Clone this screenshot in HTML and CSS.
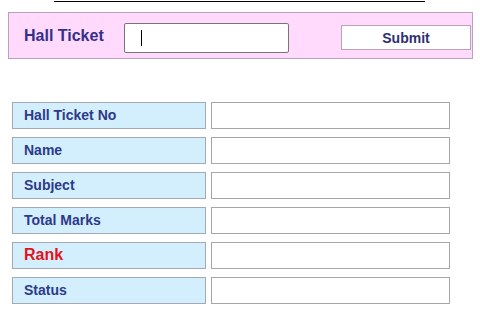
FILE: index.html
```html
<!DOCTYPE html>
<html>
<head>
<meta charset="utf-8">
<link rel="stylesheet" href="styles.css">
</head>
<body>
<div class="rule"></div>
<div class="search">
  <span class="search-label">Hall Ticket</span>
  <div class="field"><span class="caret"></span></div>
  <button class="submit" type="button">Submit</button>
</div>
<div class="results">
  <div class="row"><div class="label">Hall Ticket No</div><div class="value"></div></div>
  <div class="row"><div class="label">Name</div><div class="value"></div></div>
  <div class="row"><div class="label">Subject</div><div class="value"></div></div>
  <div class="row"><div class="label">Total Marks</div><div class="value"></div></div>
  <div class="row"><div class="label rank">Rank</div><div class="value"></div></div>
  <div class="row"><div class="label">Status</div><div class="value"></div></div>
</div>
</body>
</html>
```
FILE: styles.css
```css
* { box-sizing: border-box; }
html, body { margin: 0; padding: 0; background: #ffffff; }
body {
  font-family: "Liberation Sans", Arial, sans-serif;
  width: 480px;
  height: 317px;
  overflow: hidden;
}
.rule {
  margin: 1px 0 0 54px;
  width: 371px;
  height: 1px;
  background: #000000;
}
.search {
  margin: 10px 0 0 8px;
  width: 465px;
  height: 47px;
  border: 1px solid #b9a3bb;
  background: #ffdafc;
  display: flex;
  align-items: center;
  padding: 5px 0 0 15px;
}
.search-label {
  font-size: 16px;
  font-weight: bold;
  color: #33308a;
  width: 100px;
  padding-bottom: 4px;
}
.field {
  width: 165px;
  height: 30px;
  background: #ffffff;
  border: 1px solid #767676;
  border-radius: 2px;
  display: flex;
  align-items: center;
  padding-left: 16px;
}
.caret {
  width: 1px;
  height: 16px;
  background: #000000;
}
.submit {
  margin: 0 0 1px 52px;
  width: 130px;
  height: 25px;
  background: #ffffff;
  border: 1px solid #b9a3bb;
  border-radius: 0;
  font-family: "Liberation Sans", Arial, sans-serif;
  font-size: 14px;
  font-weight: bold;
  color: #2e2f75;
  padding: 0;
}
.results {
  margin: 43px 0 0 12px;
  display: flex;
  flex-direction: column;
  gap: 8px;
}
.row {
  display: flex;
  gap: 5px;
  height: 27px;
}
.label {
  width: 194px;
  height: 27px;
  background: #d3effe;
  border: 1px solid #a3aab3;
  font-size: 14px;
  font-weight: bold;
  color: #2d3a88;
  display: flex;
  align-items: center;
  padding: 0 0 2px 11px;
}
.label.rank {
  color: #e5111b;
  font-size: 16px;
}
.value {
  width: 239px;
  height: 27px;
  background: #ffffff;
  border: 1px solid #a6a6a6;
}
```
